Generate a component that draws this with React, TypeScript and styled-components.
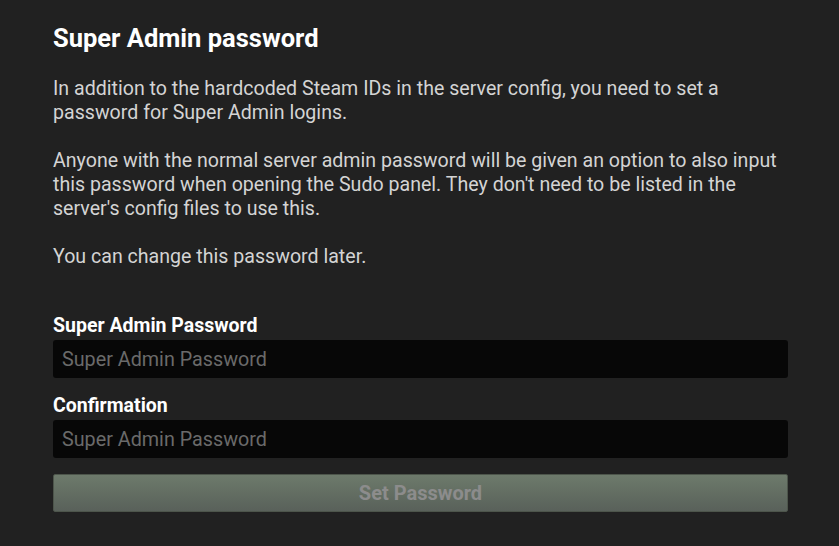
import React from "react";
import styled, { createGlobalStyle } from "styled-components";

const GlobalStyle = createGlobalStyle`
    html, body {
        margin: 0;
        padding: 0;
        background: #212121;
    }
    body {
        font-family: Roboto, "Liberation Sans", sans-serif;
    }
`;

const Page = styled.div`
    box-sizing: border-box;
    width: 839px;
    height: 546px;
    padding: 24px 51px 0 53px;
    background: #212121;
    color: #d6d6d6;
    overflow: hidden;
`;

const Title = styled.h1`
    margin: 0 0 25px;
    font-size: 25.5px;
    line-height: 28px;
    font-weight: 700;
    color: #ffffff;
`;

const Text = styled.p`
    margin: 0 0 24px;
    font-size: 19.6px;
    line-height: 24px;
    color: #d4d4d4;
`;

const Form = styled.div`
    display: flex;
    flex-direction: column;
    margin-top: 45px;
`;

const Label = styled.label`
    display: block;
    font-size: 19.5px;
    line-height: 24px;
    font-weight: 700;
    color: #ffffff;
    margin-bottom: 2px;
`;

const Input = styled.input`
    box-sizing: border-box;
    width: 100%;
    height: 38px;
    margin: 0 0 16px;
    padding: 0 9px;
    border: none;
    border-radius: 3px;
    background: #070707;
    color: #dddddd;
    font-family: Roboto, "Liberation Sans", sans-serif;
    font-size: 19.75px;
    outline: none;
    &::placeholder {
        color: #6a6a6a;
    }
`;

const Button = styled.button`
    box-sizing: border-box;
    width: 100%;
    height: 38px;
    margin-top: 0;
    border: 1px solid #4d554b;
    border-radius: 2px;
    background: linear-gradient(to bottom, #6d7a6b, #59615a);
    color: #8c8c8c;
    font-family: Roboto, "Liberation Sans", sans-serif;
    font-size: 20px;
    font-weight: 700;
    cursor: default;
`;

const App: React.FC<{}> = () => {
    return (
        <Page>
            <GlobalStyle />
            <Title>Super Admin password</Title>
            <Text>
                In addition to the hardcoded Steam IDs in the server config, you need to set a
                password for Super Admin logins.
            </Text>
            <Text>
                Anyone with the normal server admin password will be given an option to also input
                this password when opening the Sudo panel. They don't need to be listed in the
                server's config files to use this.
            </Text>
            <Text>You can change this password later.</Text>
            <Form>
                <Label>Super Admin Password</Label>
                <Input type="password" placeholder="Super Admin Password" />
                <Label>Confirmation</Label>
                <Input type="password" placeholder="Super Admin Password" />
                <Button disabled>Set Password</Button>
            </Form>
        </Page>
    );
};

export default App;
